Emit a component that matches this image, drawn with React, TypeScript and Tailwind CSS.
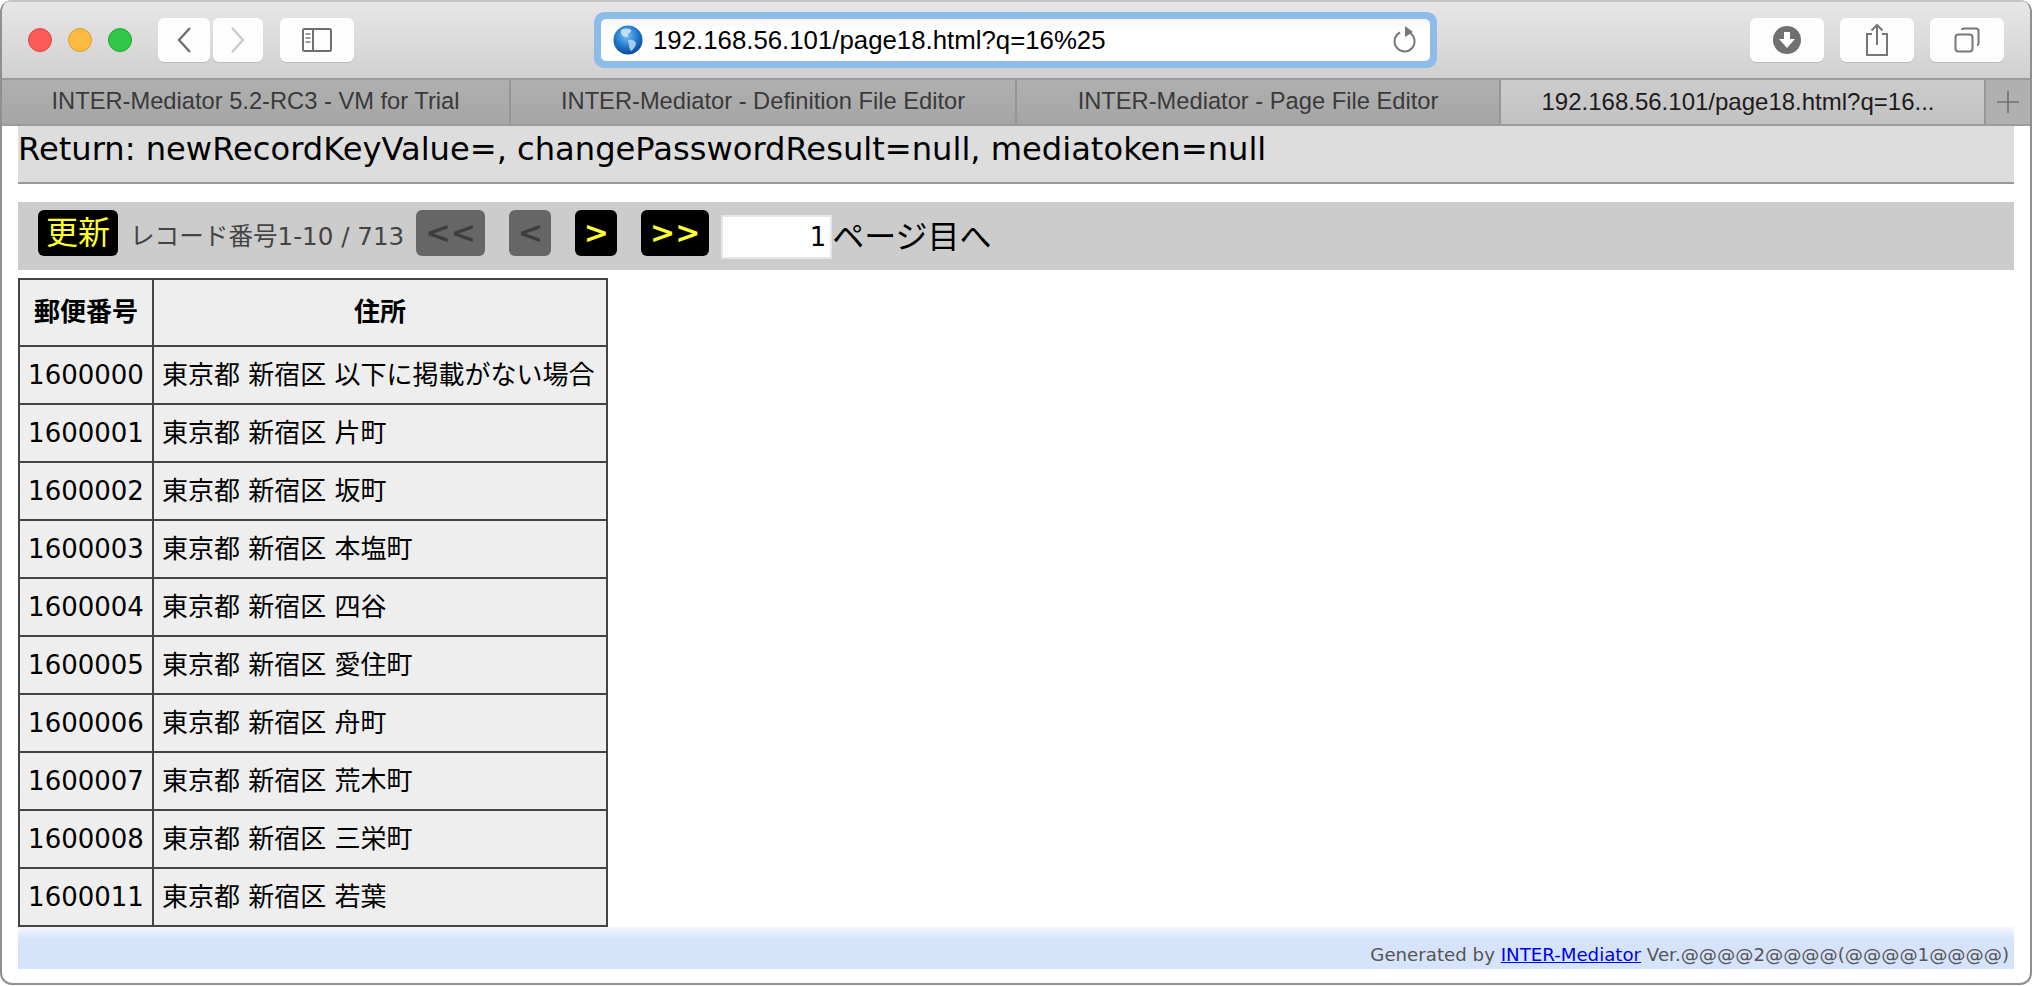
import React from "react";

const rows = [
  ["1600000", "東京都 新宿区 以下に掲載がない場合"],
  ["1600001", "東京都 新宿区 片町"],
  ["1600002", "東京都 新宿区 坂町"],
  ["1600003", "東京都 新宿区 本塩町"],
  ["1600004", "東京都 新宿区 四谷"],
  ["1600005", "東京都 新宿区 愛住町"],
  ["1600006", "東京都 新宿区 舟町"],
  ["1600007", "東京都 新宿区 荒木町"],
  ["1600008", "東京都 新宿区 三栄町"],
  ["1600011", "東京都 新宿区 若葉"],
];

const tabs = [
  { title: "INTER-Mediator 5.2-RC3 - VM for Trial", width: "w-[509px]" },
  { title: "INTER-Mediator - Definition File Editor", width: "w-[506px]" },
  { title: "INTER-Mediator - Page File Editor", width: "w-[484px]" },
];

const ToolButton = ({ className, children }: { className: string; children: React.ReactNode }) => (
  <div className={`flex h-[44px] items-center justify-center rounded-[6px] bg-[#fdfdfd] shadow-[0_1px_0_#bdbcbd] ${className}`}>
    {children}
  </div>
);

const Globe = () => (
  <svg width="30" height="30" viewBox="0 0 30 30" className="shrink-0">
    <defs>
      <radialGradient id="sea" cx="45%" cy="35%" r="70%">
        <stop offset="0%" stopColor="#7cc0f2" />
        <stop offset="55%" stopColor="#1f78cf" />
        <stop offset="100%" stopColor="#0c3f96" />
      </radialGradient>
    </defs>
    <circle cx="15" cy="15" r="14.5" fill="url(#sea)" />
    <path d="M8 5 C11 3 16 3 18 5 C19 7 16 8 15 9 C16 11 14 13 12 12 C10 11 7 9 8 5 Z" fill="#d5e8f5" opacity="0.85" />
    <path d="M15 15 C18 14 22 15 23 18 C23 21 20 25 18 26 C16 24 16 20 15 15 Z" fill="#bcd9ee" opacity="0.85" />
  </svg>
);

const PagerButton = ({ label, active, className }: { label: string; active: boolean; className: string }) => (
  <div
    className={`flex h-[46px] items-center justify-center self-start rounded-[6px] text-[30px] font-bold leading-none ${
      active ? "bg-black text-[#ffff33]" : "bg-[#666666] text-[#3d3d3d]"
    } ${className}`}
  >
    {label}
  </div>
);

export default function App() {
  return (
    <div className="h-[986px] w-[2032px] overflow-hidden bg-white font-['DejaVu_Sans','Noto_Sans_CJK_JP',sans-serif]">
      <div className="flex h-[985px] flex-col overflow-hidden rounded-[12px] border-x-2 border-b-2 border-[#8f8f8f] bg-white">
        {/* title bar */}
        <div className="flex h-[78px] shrink-0 items-start border-t-2 border-[#c4c4c4] bg-gradient-to-b from-[#e8e6e8] to-[#d1d0d1] pl-[26px] pr-[26px] pt-[16px]">
          <div className="mt-[10px] flex gap-[16px]">
            <div className="h-[24px] w-[24px] rounded-full border border-[#e2463f] bg-[#fc5b57]" />
            <div className="h-[24px] w-[24px] rounded-full border border-[#dfa023] bg-[#fdbc40]" />
            <div className="h-[24px] w-[24px] rounded-full border border-[#1aab29] bg-[#33c748]" />
          </div>
          <div className="ml-[26px] flex gap-[3px]">
            <ToolButton className="w-[52px]">
              <svg width="20" height="30" viewBox="0 0 20 30" fill="none" stroke="#707070" strokeWidth="2.4">
                <path d="M16 3 L5 15 L16 27" />
              </svg>
            </ToolButton>
            <ToolButton className="w-[50px]">
              <svg width="20" height="30" viewBox="0 0 20 30" fill="none" stroke="#c9c9c9" strokeWidth="2.4">
                <path d="M4 3 L15 15 L4 27" />
              </svg>
            </ToolButton>
          </div>
          <ToolButton className="ml-[17px] w-[74px]">
            <svg width="30" height="24" viewBox="0 0 30 24" fill="none" stroke="#707070" strokeWidth="2">
              <rect x="1" y="1" width="28" height="22" rx="1.5" />
              <path d="M11 1 V23" />
              <path d="M3.5 6 H8.5 M3.5 10 H8.5 M3.5 14 H8.5" strokeWidth="2" stroke="#9a9a9a" />
            </svg>
          </ToolButton>

          {/* address bar */}
          <div className="ml-[240px] mt-[-6px] flex h-[56px] w-[843px] items-center rounded-[10px] bg-[#8dbbea] p-[7px]">
            <div className="flex h-full w-full items-center rounded-[5px] bg-gradient-to-b from-[#f6f6f8] to-white to-30% pl-[12px] pr-[12px]">
              <Globe />
              <span className="ml-[10px] font-['Liberation_Sans'] text-[25.8px] text-black">192.168.56.101/page18.html?q=16%25</span>
              <svg className="ml-auto" width="26" height="30" viewBox="0 0 26 30" fill="none">
                <path d="M18 8 A10 10 0 1 1 8 7.5" stroke="#777777" strokeWidth="2" />
                <path d="M14 1 L22 7 L14 12 Z" fill="#777777" transform="translate(-1 0)" />
              </svg>
            </div>
          </div>

          <div className="ml-auto flex gap-[16px]">
            <ToolButton className="w-[74px]">
              <svg width="28" height="28" viewBox="0 0 28 28">
                <circle cx="14" cy="14" r="14" fill="#707070" />
                <path d="M11 6 H17 V13 H22 L14 22 L6 13 H11 Z" fill="#ffffff" />
              </svg>
            </ToolButton>
            <ToolButton className="w-[74px]">
              <svg width="24" height="34" viewBox="0 0 24 34" fill="none" stroke="#777777" strokeWidth="2">
                <path d="M7 11 H2 V32 H22 V11 H17" />
                <path d="M12 22 V2 M6.5 7.5 L12 2 L17.5 7.5" />
              </svg>
            </ToolButton>
            <ToolButton className="w-[74px]">
              <svg width="26" height="26" viewBox="0 0 26 26" fill="none" stroke="#777777" strokeWidth="2">
                <rect x="1.5" y="7.5" width="17" height="17" rx="3" />
                <path d="M8 3 Q8 1.5 10 1.5 H22 Q24.5 1.5 24.5 4 V16 Q24.5 18 23 18" />
              </svg>
            </ToolButton>
          </div>
        </div>

        {/* tab strip */}
        <div className="flex h-[48px] shrink-0 border-y-2 border-[#9c9b9c] bg-gradient-to-b from-[#b1b0b1] to-[#a6a5a6] text-[23.7px] leading-none">
          {tabs.map((tab) => (
            <div
              key={tab.title}
              className={`flex items-center justify-center border-r-2 border-[#979697] font-['Liberation_Sans'] text-[#3a3a3a] ${tab.width}`}
            >
              {tab.title}
            </div>
          ))}
          <div className="flex w-[483px] items-center justify-center bg-gradient-to-b from-[#cdcccd] to-[#c3c2c3] pr-[9px] font-['Liberation_Sans'] text-[24px] text-[#1c1c1c]">
            192.168.56.101/page18.html?q=16...
          </div>
          <div className="flex flex-1 items-center justify-center border-l-2 border-[#979697] bg-[#b1b0b1]">
            <svg width="22" height="22" viewBox="0 0 22 22" stroke="#707070" strokeWidth="1.6">
              <path d="M11 0 V22 M0 11 H22" />
            </svg>
          </div>
        </div>

        {/* page */}
        <div className="flex flex-1 flex-col pl-[16px] pr-[16px]">
          <div className="h-[58px] shrink-0 border-b-2 border-[#999999] bg-[#dddddd] pt-[4px] text-[32.15px] leading-[38px] text-black">
            Return: newRecordKeyValue=, changePasswordResult=null, mediatoken=null
          </div>

          <div className="mt-[18px] flex h-[68px] shrink-0 items-center bg-[#cccccc] pl-[20px] pt-[2px]">
            <div className="mt-[6px] flex h-[46px] w-[80px] items-center justify-center self-start rounded-[6px] bg-black text-[32px] leading-none text-[#ffff33]">
              更新
            </div>
            <span className="ml-[12px] text-[24.6px] text-[#444444]">レコード番号1-10 / 713</span>
            <PagerButton label="<<" active={false} className="ml-[12px] mt-[6px] w-[69px]" />
            <PagerButton label="<" active={false} className="ml-[24px] mt-[6px] w-[42px]" />
            <PagerButton label=">" active className="ml-[24px] mt-[6px] w-[42px]" />
            <PagerButton label=">>" active className="ml-[24px] mt-[6px] w-[68px]" />
            <div className="ml-[12px] flex h-[44px] w-[111px] items-center justify-end border-2 border-[#e6e6e6] bg-white pr-[4px] text-[26px] text-black">
              1
            </div>
            <span className="text-[32px] leading-none text-black">ページ目へ</span>
          </div>

          <table className="mt-[8px] w-[590px] border-collapse border-2 border-[#444444] bg-[#eeeeee] text-[26px] text-black">
            <thead>
              <tr className="h-[67px]">
                <th className="w-[134px] border-2 border-[#444444] p-0 text-center">郵便番号</th>
                <th className="border-2 border-[#444444] p-0 text-center">住所</th>
              </tr>
            </thead>
            <tbody>
              {rows.map(([zip, address]) => (
                <tr key={zip} className="h-[58px]">
                  <td className="border-2 border-[#444444] p-0 text-center">{zip}</td>
                  <td className="whitespace-nowrap border-2 border-[#444444] py-0 pl-[8px] pr-0">{address}</td>
                </tr>
              ))}
            </tbody>
          </table>

          <div className="flex h-[42px] shrink-0 items-end justify-end bg-gradient-to-b from-[#f4f7fe] to-[#d5e3fb] to-30% pb-[1px] pr-[5px] text-[18.2px] text-[#555555]">
            <span>
              Generated by <a className="text-[#0000ee] underline" href="#">INTER-Mediator</a> Ver.@@@@2@@@@(@@@@1@@@@)
            </span>
          </div>
        </div>
      </div>
    </div>
  );
}
